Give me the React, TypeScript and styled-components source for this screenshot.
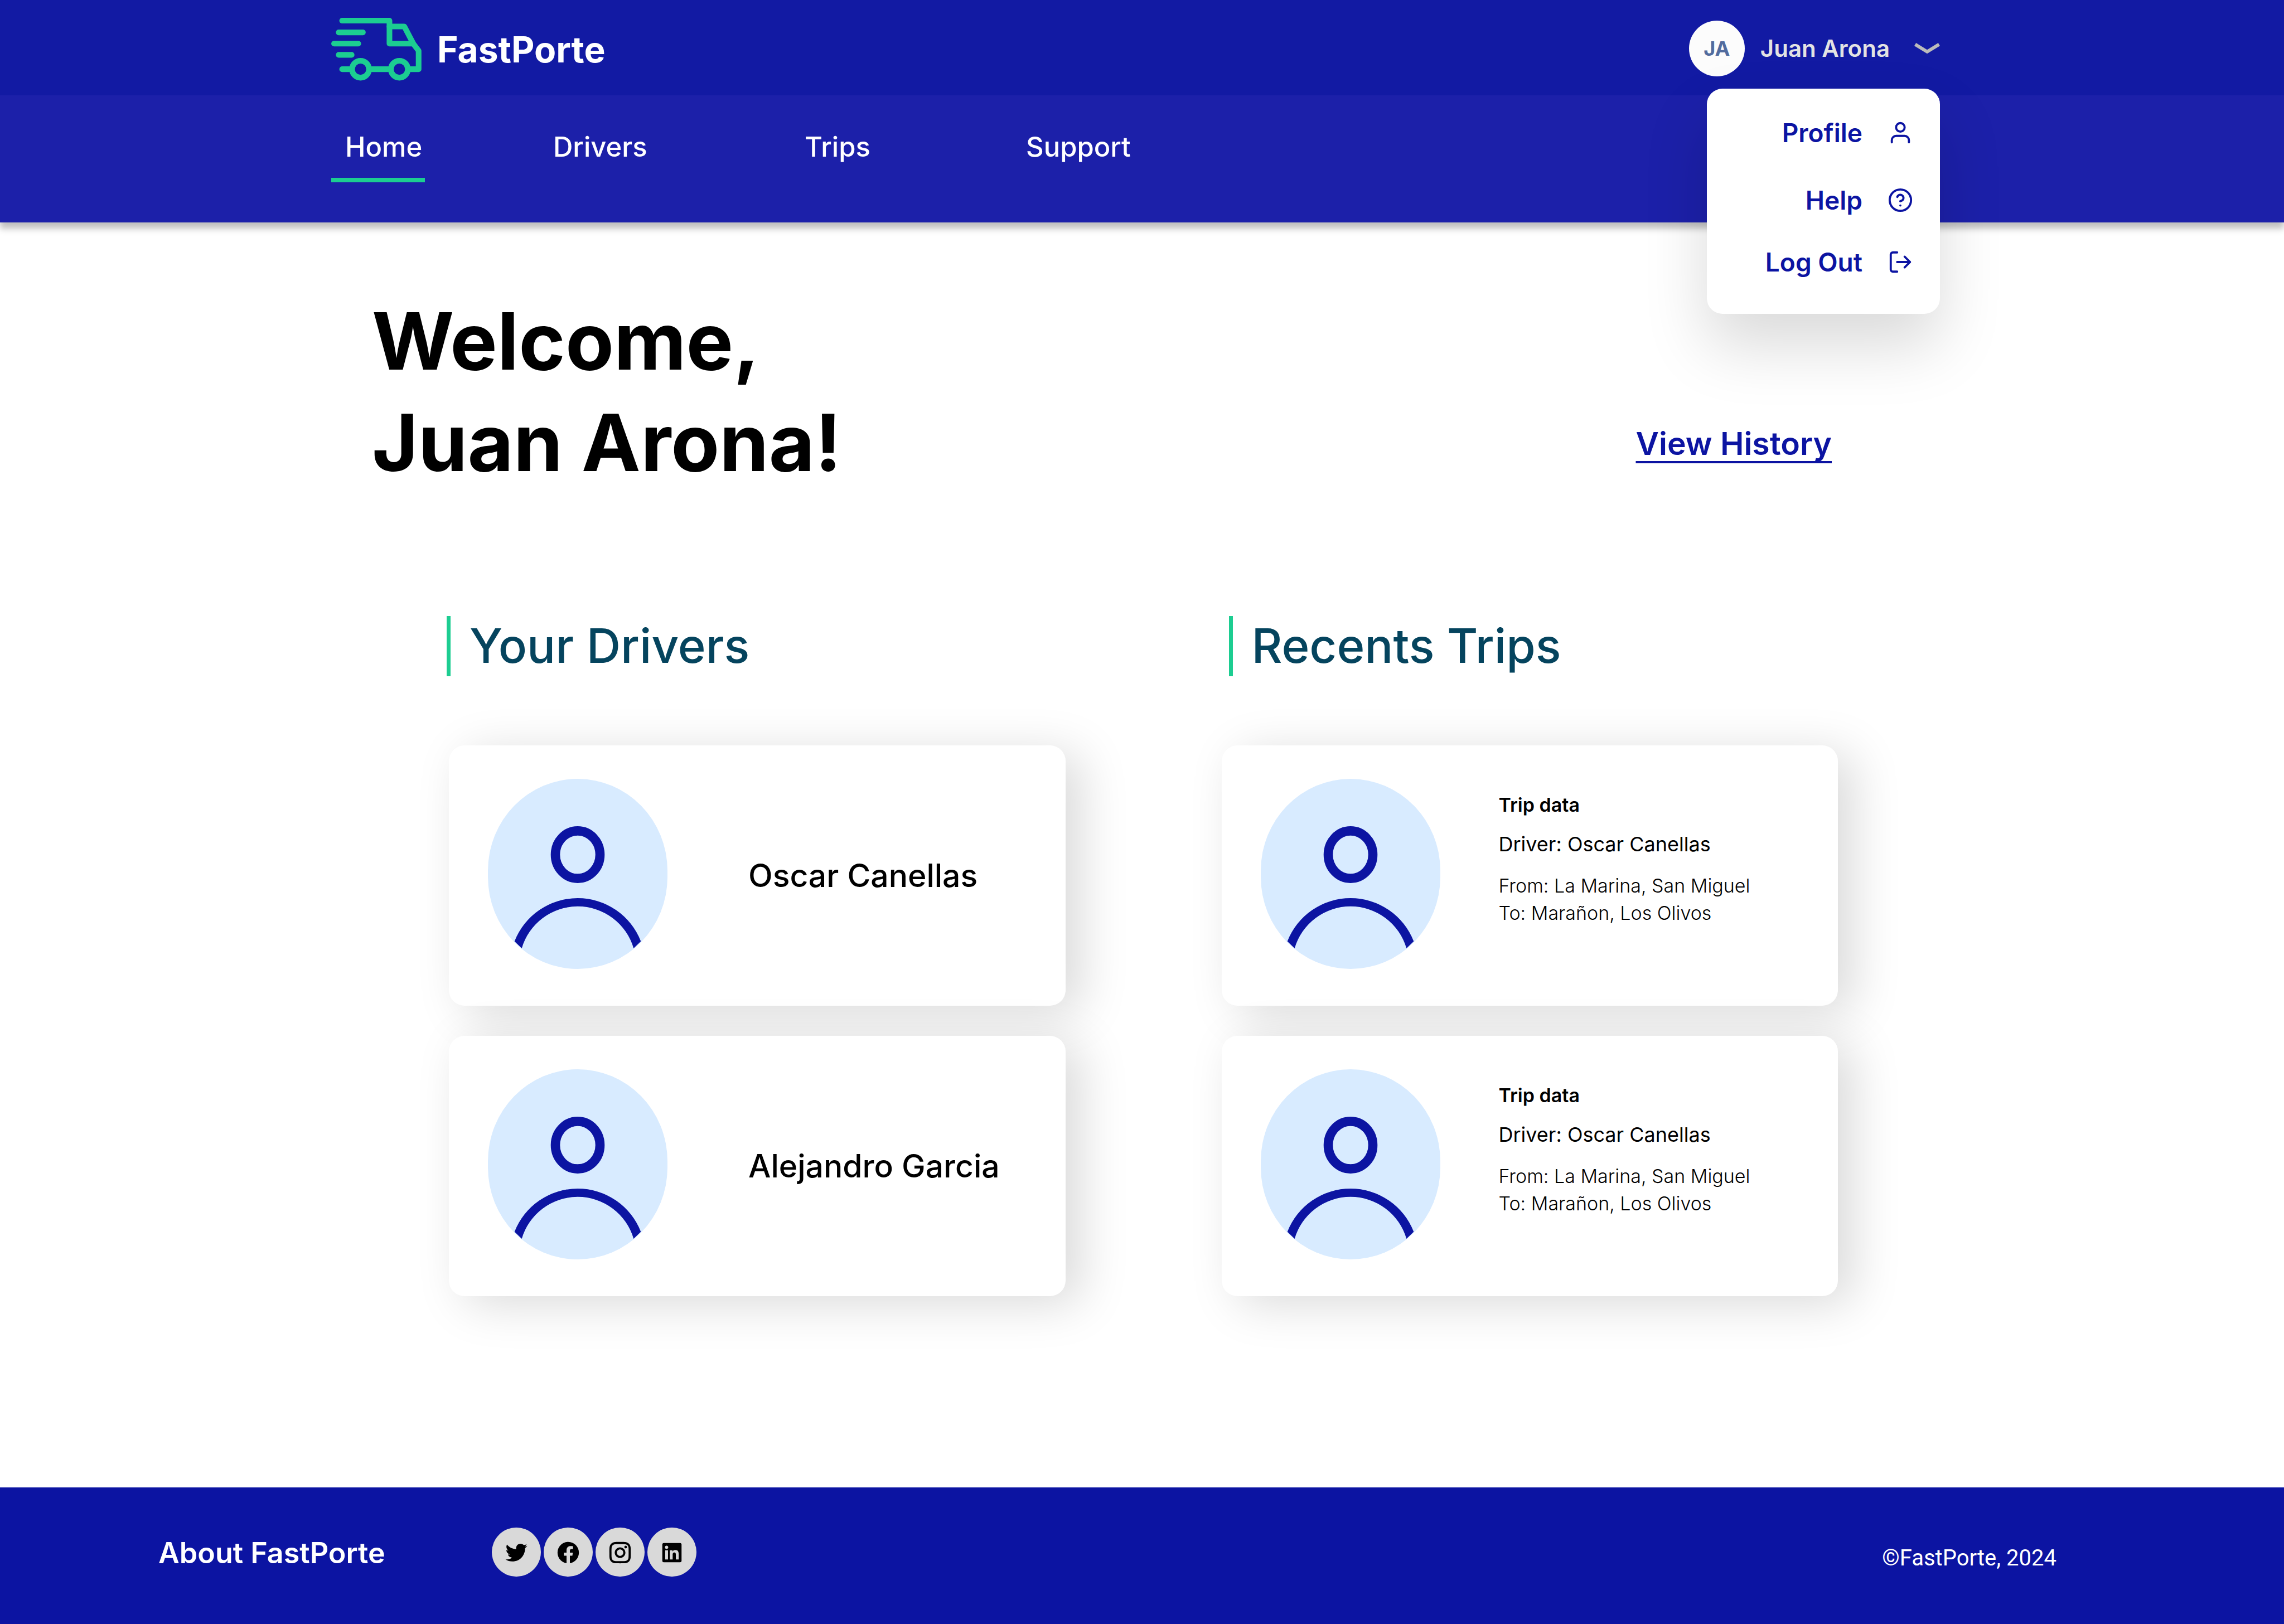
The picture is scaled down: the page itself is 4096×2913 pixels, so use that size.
import React from "react";
import styled, { createGlobalStyle } from "styled-components";
import { FiHelpCircle, FiLogOut, FiUser } from "react-icons/fi";
import {
  RiFacebookCircleFill,
  RiInstagramLine,
  RiLinkedinBoxFill,
  RiTwitterFill,
} from "react-icons/ri";

const color = {
  brand: "#0c14a2",
  bar: "#121aa3",
  nav: "#1c20a9",
  accent: "#1ccd91",
  heading: "#05445e",
  avatar: "#d8ebff",
};

const GlobalStyle = createGlobalStyle`
  *, *::before, *::after {
    box-sizing: border-box;
  }

  body {
    margin: 0;
    background: #fff;
    color: #000;
    font-family: Inter, "Liberation Sans", sans-serif;
  }

  h1, h2, h3, p, ul {
    margin: 0;
    padding: 0;
  }

  ul {
    list-style: none;
  }

  a {
    color: inherit;
    text-decoration: none;
  }

  button {
    border: 0;
    padding: 0;
    background: none;
    color: inherit;
    font: inherit;
    cursor: pointer;
  }

  svg {
    display: block;
    flex: none;
  }
`;

const Page = styled.div`
  display: flex;
  flex-direction: column;
  min-height: 100vh;
`;

const Header = styled.header`
  position: relative;
  box-shadow: 0 11px 11px rgba(0, 0, 0, 0.25);
`;

const TopBar = styled.div`
  display: flex;
  align-items: center;
  justify-content: space-between;
  height: 171px;
  padding: 2px 617px 0 594px;
  background: ${color.bar};
  color: #fff;
`;

const Brand = styled.a`
  display: flex;
  align-items: center;
  gap: 28px;
  padding-top: 4px;
  font-size: 64px;
  font-weight: 700;
  line-height: 76px;
`;

const Account = styled.div`
  position: relative;
`;

const AccountButton = styled.button`
  display: flex;
  align-items: center;
  color: #e3e3e3;
  font-size: 42px;
  font-weight: 600;
  line-height: 52px;
`;

const Initials = styled.span`
  display: flex;
  align-items: center;
  justify-content: center;
  width: 100px;
  height: 100px;
  margin-right: 28px;
  border-radius: 50%;
  background: #fcfcfc;
  color: #526c9e;
  font-size: 36px;
  font-weight: 700;
`;

const Chevron = styled.svg`
  width: 46px;
  height: 20px;
  margin-left: 44px;
`;

const Menu = styled.ul`
  position: absolute;
  top: 122px;
  right: 0;
  z-index: 2;
  display: grid;
  grid-template-rows: 132px 110px 112px;
  width: 418px;
  padding: 13px 48px 37px 0;
  border-radius: 28px;
  background: #fff;
  box-shadow: 0 57px 114px rgba(0, 0, 0, 0.15);
`;

const MenuLink = styled.a`
  display: flex;
  align-items: center;
  justify-content: flex-end;
  gap: 45px;
  height: 100%;
  color: ${color.brand};
  font-size: 46px;
  font-weight: 600;
  line-height: 56px;

  svg {
    width: 46px;
    height: 46px;
  }
`;

const Nav = styled.nav`
  display: grid;
  grid-template-columns: 373px 451px 397px auto;
  justify-items: start;
  padding: 64px 617px 72px 594px;
  background: ${color.nav};
`;

const NavLink = styled.a<{ $active?: boolean }>`
  padding: 0 5px 26px 25px;
  border-bottom: 8px solid ${(p) => (p.$active ? color.accent : "transparent")};
  color: #fff;
  font-size: 49px;
  font-weight: 500;
  line-height: 58px;
`;

const Main = styled.main`
  flex: 1;
  padding-top: 121px;
`;

const Intro = styled.div`
  display: flex;
  align-items: flex-end;
  justify-content: space-between;
  padding: 0 811px 0 667px;
`;

const Welcome = styled.h1`
  font-size: 142px;
  font-weight: 700;
  line-height: 182px;
`;

const HistoryLink = styled.a`
  margin-bottom: 54px;
  color: ${color.brand};
  font-size: 57px;
  font-weight: 600;
  line-height: 68px;
  text-decoration: underline;
  text-decoration-thickness: 4px;
  text-underline-offset: 11px;
  text-decoration-skip-ink: none;
`;

const Columns = styled.div`
  display: grid;
  grid-template-columns: 1fr 1fr;
  gap: 280px;
  margin-top: 221px;
  padding: 0 800px 0 805px;
`;

const SectionTitle = styled.h2<{ $indent: number }>`
  margin-left: ${(p) => p.$indent}px;
  padding-left: 34px;
  border-left: 7px solid ${color.accent};
  color: ${color.heading};
  font-size: 85px;
  font-weight: 500;
  line-height: 108px;
`;

const CardList = styled.ul`
  display: grid;
  gap: 54px;
  margin-top: 124px;
`;

const Card = styled.li`
  display: flex;
  height: 467px;
  padding: 60px 70px;
  border-radius: 28px;
  background: #fff;
  box-shadow: 28px 14px 85px rgba(0, 0, 0, 0.15);
`;

const Portrait = styled.svg`
  width: 322px;
  height: 341px;
`;

const DriverName = styled.h3`
  align-self: center;
  margin-left: 145px;
  font-size: 57px;
  font-weight: 500;
  line-height: 68px;
`;

const Trip = styled.div`
  display: flex;
  flex-direction: column;
  gap: 28px;
  margin-left: 105px;
  padding-top: 26px;
`;

const TripTitle = styled.h3`
  font-size: 34px;
  font-weight: 600;
  line-height: 41px;
`;

const TripDriver = styled.p`
  font-size: 36px;
  font-weight: 400;
  line-height: 44px;
`;

const TripRoute = styled.p`
  font-size: 34px;
  font-weight: 300;
  line-height: 49px;
`;

const Footer = styled.footer`
  display: flex;
  align-items: center;
  height: 245px;
  padding: 0 408px 14px 284px;
  background: ${color.brand};
  color: #fff;
`;

const AboutLink = styled.a`
  padding-top: 4px;
  font-size: 52px;
  font-weight: 600;
  line-height: 62px;
`;

const SocialList = styled.ul`
  display: flex;
  gap: 5px;
  margin-left: 191px;
`;

const SocialLink = styled.a`
  display: flex;
  align-items: center;
  justify-content: center;
  width: 88px;
  height: 88px;
  padding-top: 2px;
  border-radius: 50%;
  background: #d9d9d9;
  color: #000;

  svg {
    width: 46px;
    height: 46px;
  }
`;

const Copyright = styled.p`
  margin: 22px 0 0 auto;
  font-family: Roboto, "Liberation Sans", sans-serif;
  font-size: 40px;
  line-height: 46px;
`;

function TruckLogo() {
  return (
    <svg width="162" height="113" viewBox="0 0 228 159" fill="none" stroke={color.accent} strokeWidth="14.2" strokeLinecap="round" strokeLinejoin="round" aria-hidden="true">
      <path d="M27.5 7.1H147V65H207" />
      <path d="M147 21.8H184.5L207 65L220.6 83V129.7H196" />
      <path d="M148 129.7H98M50 129.7H27.5" />
      <path d="M18.8 36.7H80M7.1 65H68.4M18.8 93.4H51.6" />
      <circle cx="74" cy="129.7" r="21.4" />
      <circle cx="172" cy="129.7" r="21.4" />
    </svg>
  );
}

function PersonPortrait() {
  return (
    <Portrait viewBox="0 0 322 341" aria-hidden="true">
      <rect width="322" height="341" rx="161" ry="165" fill={color.avatar} />
      <ellipse cx="161" cy="136" rx="40" ry="42.6" fill="none" stroke={color.brand} strokeWidth="16.6" />
      <path d="M47.7 291.6A121.5 121.5 0 0 1 274.3 291.6L261.3 304A104.5 104.5 0 0 0 60.7 304Z" fill={color.brand} />
    </Portrait>
  );
}

const navItems = ["Home", "Drivers", "Trips", "Support"];

const menuItems = [
  { label: "Profile", Icon: FiUser },
  { label: "Help", Icon: FiHelpCircle },
  { label: "Log Out", Icon: FiLogOut },
];

const drivers = ["Oscar Canellas", "Alejandro Garcia"];

const trips = [
  { id: 1, driver: "Oscar Canellas", from: "La Marina, San Miguel", to: "Marañon, Los Olivos" },
  { id: 2, driver: "Oscar Canellas", from: "La Marina, San Miguel", to: "Marañon, Los Olivos" },
];

const socials = [
  { label: "Twitter", Icon: RiTwitterFill },
  { label: "Facebook", Icon: RiFacebookCircleFill },
  { label: "Instagram", Icon: RiInstagramLine },
  { label: "LinkedIn", Icon: RiLinkedinBoxFill },
];

export default function App() {
  return (
    <Page>
      <GlobalStyle />
      <Header>
        <TopBar>
          <Brand href="#">
            <TruckLogo />
            FastPorte
          </Brand>
          <Account>
            <AccountButton type="button" aria-haspopup="true" aria-expanded="true">
              <Initials>JA</Initials>
              Juan Arona
              <Chevron viewBox="0 0 46 20" fill="none" stroke="#bbbbbb" strokeWidth="6" aria-hidden="true">
                <path d="M1.6 2.6L23 15.8L44.4 2.6" />
              </Chevron>
            </AccountButton>
            <Menu>
              {menuItems.map(({ label, Icon }) => (
                <li key={label}>
                  <MenuLink href="#">
                    {label}
                    <Icon aria-hidden="true" />
                  </MenuLink>
                </li>
              ))}
            </Menu>
          </Account>
        </TopBar>
        <Nav>
          {navItems.map((item, i) => (
            <NavLink key={item} href="#" $active={i === 0}>
              {item}
            </NavLink>
          ))}
        </Nav>
      </Header>

      <Main>
        <Intro>
          <Welcome>
            Welcome,
            <br />
            Juan Arona!
          </Welcome>
          <HistoryLink href="#">View History</HistoryLink>
        </Intro>

        <Columns>
          <section>
            <SectionTitle $indent={-4}>Your Drivers</SectionTitle>
            <CardList>
              {drivers.map((name) => (
                <Card key={name}>
                  <PersonPortrait />
                  <DriverName>{name}</DriverName>
                </Card>
              ))}
            </CardList>
          </section>
          <section>
            <SectionTitle $indent={13}>Recents Trips</SectionTitle>
            <CardList>
              {trips.map((trip) => (
                <Card key={trip.id}>
                  <PersonPortrait />
                  <Trip>
                    <TripTitle>Trip data</TripTitle>
                    <TripDriver>Driver: {trip.driver}</TripDriver>
                    <TripRoute>
                      From: {trip.from}
                      <br />
                      To: {trip.to}
                    </TripRoute>
                  </Trip>
                </Card>
              ))}
            </CardList>
          </section>
        </Columns>
      </Main>

      <Footer>
        <AboutLink href="#">About FastPorte</AboutLink>
        <SocialList>
          {socials.map(({ label, Icon }) => (
            <li key={label}>
              <SocialLink href="#" aria-label={label}>
                <Icon aria-hidden="true" />
              </SocialLink>
            </li>
          ))}
        </SocialList>
        <Copyright>©FastPorte, 2024</Copyright>
      </Footer>
    </Page>
  );
}
